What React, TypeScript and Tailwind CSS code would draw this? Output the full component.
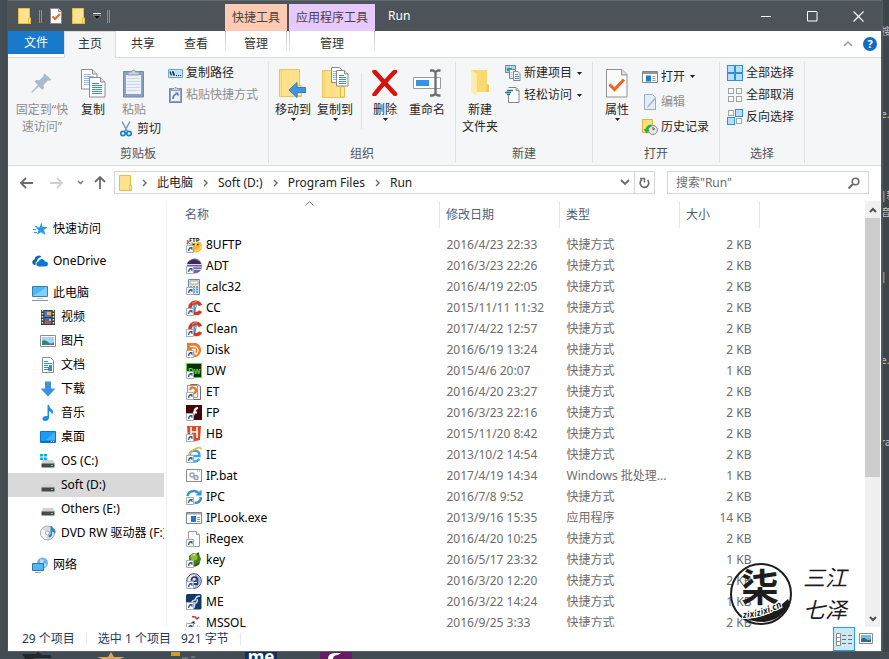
import React from 'react';

type IconProps = { children?: React.ReactNode; w?: number; h?: number };

const Svg = ({ children, w = 16, h = 16 }: IconProps) => (
  <svg width={w} height={h} viewBox={`0 0 ${w} ${h}`} className="block shrink-0" aria-hidden="true">
    {children}
  </svg>
);

const FolderSmall = () => (
  <Svg w={13} h={16}>
    <path d="M.5.5h11v9.5h1v5.500h-12z" fill="#ffe391" stroke="#e8bd42" />
    <path d="M10.500 15v-5h2v5z" fill="#fff0b8" stroke="#e8bd42" />
  </Svg>
);

const PageCheckSmall = () => (
  <Svg w={12} h={16}>
    <path d="M.5.5h8l3 3v12h-11z" fill="#fff" stroke="#8a8a8a" />
    <path d="M8.500.5v3h3" fill="#ddd" stroke="#8a8a8a" />
    <path d="M2.500 8.500l2.500 2.500 5-5" fill="none" stroke="#f0602a" strokeWidth="2" />
  </Svg>
);

const Caret = () => (
  <Svg w={5} h={3}>
    <path d="M0 0h5l-2.500 3z" fill="#1e1e1e" />
  </Svg>
);

const Pin = () => (
  <Svg w={22} h={22}>
    <path d="M13.500 1.500L20.500 8l-2 .8-1.500-.3-4.500 4.500.5 3-1.800 1.800-3.500-3.300L1.500 20.500l-1 .3.300-1.300 6-6.500L3.500 9.500 5.300 8l3 .3L12.800 4l-.3-1.300z" fill="#aabacd" />
  </Svg>
);

const pageLines = (x: number, y: number, color: string) => (
  <path d={`M${x} ${y}h7M${x} ${y + 2}h10M${x} ${y + 4}h10M${x} ${y + 6}h10M${x} ${y + 8}h10M${x} ${y + 10}h10`} stroke={color} />
);

const CopyIcon = () => (
  <Svg w={25} h={29}>
    <path d="M.5.5h11l4.500 4.500v15h-15.500z" fill="#fff" stroke="#8b8b8b" />
    <path d="M11.500.5v4.500h4.500" fill="#e4e4e4" stroke="#8b8b8b" />
    {pageLines(3, 5.5, '#8db9ee')}
    <path d="M8.500 8.500h11l4.500 4.500v15h-15.500z" fill="#fff" stroke="#8b8b8b" />
    <path d="M19.500 8.500v4.500h4.500" fill="#e4e4e4" stroke="#8b8b8b" />
    {pageLines(11, 14.5, '#3d8ae0')}
  </Svg>
);

const PasteIcon = () => (
  <Svg w={22} h={30}>
    <path d="M.5 3.500h20v25.500h-20z" fill="#8ca0c2" stroke="#7388ad" />
    <path d="M3 7h15v19h-15z" fill="#edf2f9" />
    <path d="M4 10.500h13M4 13.500h13M4 16.500h13M4 19.500h13M4 22.500h13" stroke="#ccd7e8" />
    <path d="M5 7v-3h3.500a2 2 0 0 1 4 0h3.500v3z" fill="#cbd3df" stroke="#8b9ab4" />
  </Svg>
);

const CutIcon = () => (
  <Svg w={12} h={16}>
    <path d="M2 .5l5.500 10M10 .5l-5.500 10" stroke="#8493a5" strokeWidth="1.500" />
    <circle cx="3" cy="12.500" r="2.200" fill="none" stroke="#1c7fc4" strokeWidth="1.700" />
    <circle cx="9" cy="12.500" r="2.200" fill="none" stroke="#1c7fc4" strokeWidth="1.700" />
  </Svg>
);

const CopyPathIcon = () => (
  <Svg w={15} h={16}>
    <path d="M.5 4.500h14v8h-14z" fill="#bfe3fb" stroke="#6fa8d0" />
    <path d="M2 6.500l1.500 4M4.500 6.500l1.500 4M5 6.500l1.500 4" stroke="#182a3a" strokeWidth="1.200" />
    <path d="M8 10.500h1M10 10.500h1M12 10.500h1" stroke="#182a3a" />
  </Svg>
);

const PasteShortcutIcon = () => (
  <Svg w={15} h={16}>
    <path d="M1.500 1.500h12v14h-12z" fill="#8ca0c2" stroke="#7388ad" />
    <path d="M3 4h9v10h-9z" fill="#edf2f9" />
    <path d="M4 3.500v-2h2l1-1h1l1 1h2v2z" fill="#cbd3df" stroke="#8b9ab4" />
    <path d="M5 12q0-4 3-4.500" fill="none" stroke="#5c77a5" strokeWidth="1.700" />
    <path d="M6.500 5.500h4v4z" fill="#5c77a5" />
  </Svg>
);

const folderBody = (
  <>
    <path d="M.5 1.500h20v16h1.500v11h-21.500z" fill="#ffe18a" stroke="#ecc558" />
    <path d="M2.500 2v26" stroke="#f3d272" />
    <path d="M18.500 28v-9q0-1.500 2-1.500t2 1.500v9z" fill="#ffe9a4" stroke="#e6bc47" />
  </>
);

const MoveToIcon = () => (
  <Svg w={28} h={30}>
    {folderBody}
    <path d="M10 22l8-7.500v5h8.500v5h-8.500v5z" fill="#3e97e0" stroke="#2b7dc4" />
  </Svg>
);

const CopyToIcon = () => (
  <Svg w={27} h={32}>
    <g transform="translate(0 2)">{folderBody}</g>
    <path d="M9.500.5h8l3 3v12h-11z" fill="#fff" stroke="#8b8b8b" />
    <path d="M11 4.500h6M11 6.500h6M11 8.500h6M11 10.500h6M11 12.500h6" stroke="#8db9ee" />
    <path d="M14.500 3.500h8l3.500 3.500v12h-11.500z" fill="#fff" stroke="#8b8b8b" />
    <path d="M22.500 3.500v3.500h3.500" fill="#e4e4e4" stroke="#8b8b8b" />
    <path d="M17 8.500h5M17 10.500h7M17 12.500h7M17 14.500h7M17 16.500h7" stroke="#3d8ae0" />
  </Svg>
);

const DeleteIcon = () => (
  <Svg w={26} h={26}>
    <path d="M2.500 1.500Q9 9 23 24M23 1.500Q9 16 2.500 24.500" fill="none" stroke="#d8120c" strokeWidth="4.500" strokeLinecap="round" />
  </Svg>
);

const RenameIcon = () => (
  <Svg w={28} h={28}>
    <path d="M.5 8.500h27v11h-27z" fill="#fdfdfd" stroke="#9b9b9b" />
    <path d="M3 11h13v6h-13z" fill="#3595e4" />
    <path d="M17 1.500h3l2.500 1.500 2.500-1.500h2.500M17 26.500h3l2.500-1.500 2.500 1.500h2.500M22.500 2v24" fill="none" stroke="#6d6d6d" strokeWidth="2.300" />
  </Svg>
);

const NewFolderIcon = () => (
  <Svg w={20} h={28}>
    <path d="M1 1h16v14l2 1v7h-13z" fill="#fad96f" />
    <path d="M17 15l2 1v7h-3z" fill="#f3c850" />
    <path d="M1 1l6 4v22l-6-4z" fill="#ffecaa" />
  </Svg>
);

const NewItemIcon = () => (
  <Svg>
    <path d="M.5.5h10v7h-10z" fill="#a7dbf3" stroke="#5d8ea8" />
    <path d="M2 3h5v3h-5z" fill="#3f8f9e" />
    <path d="M4.500 4.500h6v9h-6z" fill="#fff" stroke="#858585" />
    <path d="M8.500 6.500h4.500l2 2v7h-6.500z" fill="#fff" stroke="#858585" />
    <path d="M10 9.500h3M10 11.500h4M10 13.500h4" stroke="#3d8ae0" />
    <path d="M5.500 7.500h2M5.500 9.500h2M5.500 11.500h2" stroke="#8db9ee" />
  </Svg>
);

const EasyAccessIcon = () => (
  <Svg>
    <path d="M3.500.5h7.500l3 3v12h-10.500v-7" fill="#fff" stroke="#858585" />
    <path d="M11 .5v3h3" fill="#ddd" stroke="#858585" />
    <path d="M2 3.500h6M0 5.500h6M2 7.500h3" stroke="#1c6fb5" strokeWidth="1.300" />
  </Svg>
);

const PropertiesIcon = () => (
  <Svg w={22} h={29}>
    <path d="M.5.5h15.500l5 5v22.500h-20.500z" fill="#fbfbfb" stroke="#909090" />
    <path d="M15.500.5v5.500h5.500" fill="#ddd" stroke="#909090" />
    <path d="M3.500 15.500l5 5 9.500-10" fill="none" stroke="#f4611f" strokeWidth="3" />
  </Svg>
);

const OpenIcon = () => (
  <Svg>
    <path d="M.5 2.500h15v11h-15z" fill="#fff" stroke="#7f8487" />
    <path d="M1 3h14v2h-14z" fill="#8f9598" />
    <path d="M4 6.500h5v6h-5z" fill="#1a7ccd" />
    <path d="M10.500 7.500h3M10.500 9.500h3M10.500 11.500h3" stroke="#8e9ba5" />
  </Svg>
);

const EditIcon = () => (
  <Svg>
    <path d="M2.500.5h8l3 3v12h-11z" fill="#e6edf7" stroke="#98abc9" />
    <path d="M14.500 4l-8 9-1.500 1.500.5-2.500 8-9z" fill="#a4b4cd" />
  </Svg>
);

const HistoryIcon = () => (
  <Svg>
    <path d="M.5.5h10v13h-10z" fill="#ffe07f" stroke="#dcb447" />
    <circle cx="11" cy="11" r="4.500" fill="#e8e8e8" stroke="#8b8b8b" />
    <path d="M11 8v3l2-1.500" fill="none" stroke="#555" />
    <path d="M4 12q1-5 5.500-5.500" fill="none" stroke="#2fae3a" strokeWidth="2.500" />
    <path d="M1.500 10l3 4.500 3-3.500z" fill="#2fae3a" />
  </Svg>
);

const selectSquares = [
  [0, 0],
  [8, 0],
  [0, 8],
  [8, 8],
];

const SelectIcon = ({ on }: { on: number[] }) => (
  <Svg>
    {selectSquares.map(([x, y], i) =>
      on.includes(i) ? (
        <rect key={i} x={x + 0.5} y={y + 0.5} width="7" height="7" fill="#b9def9" stroke="#2e8fdd" />
      ) : (
        <rect key={i} x={x + 1.5} y={y + 1.5} width="5" height="5" fill="#fbfbfb" stroke="#a3a3a3" />
      ),
    )}
  </Svg>
);

/* sidebar icons */

const navIcons: Record<string, React.ReactNode> = {
  star: (
    <Svg>
      <path d="M9.500 1.500l1 4.500h5l-3.500 3 1.500 5-4.500-2.800-4 2.500 1.500-4.500-3-3h4z" fill="#2a9ae6" />
      <path d="M3 5.500h2M1 8.500h3M2 11.500h3" stroke="#2a9ae6" />
    </Svg>
  ),
  cloud: (
    <Svg>
      <path d="M2.500 12a2.800 2.800 0 0 1 0-5.500 4 4 0 0 1 7-2.500q-4 .5-4.500 4-2 1-1.500 4z" fill="#0a64b4" />
      <path d="M6.500 13.500q-2.500-.5-2.300-2.700.3-2 2.300-2.300 1-3 4-2.500 2 .5 2.500 2.500 3 .3 3 2.500t-2.500 2.500z" fill="#0b78d4" />
    </Svg>
  ),
  pc: (
    <Svg>
      <path d="M.5 1.500h15v10h-15z" fill="#4eb8f6" stroke="#3b7ea8" />
      <path d="M1 11l14-9v9z" fill="#7fd0ff" />
      <path d="M5 13.500h6" stroke="#b9c3ca" />
      <path d="M0 15.500h16" stroke="#7d98aa" />
    </Svg>
  ),
  video: (
    <Svg>
      <path d="M1 1h14v15h-14z" fill="#3c3c3c" />
      <path d="M2.500 1v15M13.500 1v15" stroke="#e8e8e8" strokeWidth="1.500" strokeDasharray="1.500 1.500" />
      <path d="M4.500 2h7v6h-7z" fill="#5577c9" />
      <path d="M4.500 9h7v6h-7z" fill="#3f6ac0" />
      <path d="M7 3h4v3h-4z" fill="#f1b630" />
      <path d="M5 11l3 1 3 3h-6z" fill="#d2512d" />
      <path d="M9 10h2v2h-2z" fill="#f1b630" />
    </Svg>
  ),
  picture: (
    <Svg>
      <path d="M.5 2.500h15v11h-15z" fill="#fff" stroke="#8d8d8d" />
      <path d="M2 4h12v8h-12z" fill="#a6d4f5" />
      <path d="M2 8q3-2 6 1t6 0v3h-12z" fill="#3c7f74" />
      <path d="M2 11h12v1h-12z" fill="#3f79b5" />
    </Svg>
  ),
  doc: (
    <Svg>
      <path d="M2.500.5h8l3 3v12h-11z" fill="#fff" stroke="#8d8d8d" />
      <path d="M4 4.500h4M4 6.500h8M4 8.500h4M4 10.500h8M4 12.500h4" stroke="#2b93d1" />
      <path d="M9 8h3v2h-3zM8 11h4v3h-4z" fill="#5d8796" />
    </Svg>
  ),
  down: (
    <Svg>
      <path d="M5 .5h6v7h4.500l-7.500 8-7.500-8h4.500z" fill="#3d91df" />
    </Svg>
  ),
  music: (
    <Svg>
      <path d="M7.500 0h1.500q.5 3 3 4.500 2 2 0 5.500 0-3-3-4v7q-.5 3-4 3-3-.5-2.500-3 1-2.500 5-2z" fill="#1b8fe6" />
    </Svg>
  ),
  desktop: (
    <Svg>
      <path d="M.5 2.500h15v11h-15z" fill="#1b9bf5" stroke="#0e74c3" />
      <path d="M6 11l9-8v8z" fill="#44b0fa" />
      <path d="M1 12.500h14" stroke="#0c6cb8" />
      <path d="M11 12.500h3" stroke="#fff" strokeDasharray="1 1" />
    </Svg>
  ),
  os: (
    <Svg>
      <path d="M0 1h3v2.500h-3zM4 1h3v2.500h-3zM0 4.500h3v2.500h-3zM4 4.500h3v2.500h-3z" fill="#10b0ea" />
      <path d="M3 7h10l2 4h-13.500z" fill="#cfd1d2" />
      <path d="M1.500 10.500h13v4h-13z" fill="#464a4c" />
      <path d="M11 12.500h2" stroke="#5de04a" />
    </Svg>
  ),
  drive: (
    <Svg>
      <path d="M3 7h10l2 4h-13.500z" fill="#cfd1d2" />
      <path d="M1.500 10.500h13v4h-13z" fill="#464a4c" />
      <path d="M11 12.500h2" stroke="#5de04a" />
    </Svg>
  ),
  dvd: (
    <Svg>
      <circle cx="7.500" cy="8" r="7" fill="#dadde0" stroke="#a5a9ad" />
      <path d="M2 4l5.500 4-1 6.500q-5-1.500-5.500-6z" fill="#f6f6f6" />
      <circle cx="7.500" cy="8" r="2" fill="#fff" stroke="#9aa" />
      <path d="M10.500 1h1.500q.5 2 3 3.500 1 2 0 4.500-.5-2-3-2.500v4q-1 2.500-3.500 1.500-.5-2 2-3z" fill="#2485d6" />
    </Svg>
  ),
  network: (
    <Svg>
      <circle cx="10.500" cy="6" r="5.500" fill="#66b7e6" />
      <path d="M8 2l4 1-1 3 4 1-2 3-5-3z" fill="#b5dcf0" />
      <path d="M.5 6.500h11v7h-11z" fill="#4eb8f6" stroke="#34759c" />
      <path d="M3 15.500h6" stroke="#8ea5b4" />
    </Svg>
  ),
};

const navItems = [
  { label: '快速访问', icon: 'star', top: true },
  { label: 'OneDrive', icon: 'cloud', top: true },
  { label: '此电脑', icon: 'pc', top: true },
  { label: '视频', icon: 'video' },
  { label: '图片', icon: 'picture' },
  { label: '文档', icon: 'doc' },
  { label: '下载', icon: 'down' },
  { label: '音乐', icon: 'music' },
  { label: '桌面', icon: 'desktop' },
  { label: 'OS (C:)', icon: 'os' },
  { label: 'Soft (D:)', icon: 'drive', selected: true },
  { label: 'Others (E:)', icon: 'drive' },
  { label: 'DVD RW 驱动器 (F:)', icon: 'dvd' },
  { label: '网络', icon: 'network', top: true },
];

/* file icons */

const shortcutBadge = (
  <>
    <path d="M.5 8.500h7v7h-7z" fill="#fff" stroke="#a9adb0" />
    <path d="M2.500 14q0-2.500 2-3" fill="none" stroke="#2c62a5" strokeWidth="1.400" />
    <path d="M3 10h3.500v3.500z" fill="#2c62a5" />
  </>
);

const ccleaner = (
  <>
    <path d="M7 4l-1 10h3l2-10z" fill="#4f93c4" />
    <path d="M14.500 5.500Q13 2 9 2.200 4.500 3 4 7.500T9 13.500q4 .5 5.500-2.500" fill="none" stroke="#cf3a26" strokeWidth="3.500" />
    <path d="M6 3.500q2-2 5-1.500" fill="none" stroke="#e98e7c" />
    <path d="M8 5l-1.500 7M10.500 4.500l-1.500 3" stroke="#9cc8e4" />
  </>
);

const fileIcons: Record<string, React.ReactNode> = {
  ftp: (
    <>
      <circle cx="10" cy="9.500" r="6" fill="#f6ba2c" />
      <path d="M9 14q5-1 6.500-5" fill="none" stroke="#ffe15a" strokeWidth="1.500" />
      <path d="M1 3.500l3 3M4 3l-3 4" stroke="#d03a20" strokeWidth="1.500" />
      <path d="M6.500 7.500h2M11 7.500h1.500" stroke="#222" strokeWidth="1.500" />
      <text x="3" y="5" fontSize="6" fontWeight="700" fill="#111" stroke="#fff" strokeWidth="1.500" paintOrder="stroke">FTP</text>
    </>
  ),
  adt: (
    <>
      <circle cx="8.500" cy="8" r="7.500" fill="#77629f" />
      <path d="M2 4q6-5 12 0l1 2h-14z" fill="#3c2c5e" />
      <path d="M1 6.500h15M1 9h15M3 11.500h12" stroke="#dcd4ec" />
    </>
  ),
  calc: (
    <>
      <path d="M2.500.5h11v15h-11z" fill="#cfe5f7" stroke="#4f93c8" />
      <path d="M4 2h8v3h-8z" fill="#fff" stroke="#e0a055" />
      <path d="M4 8h8M4 10.500h8M4 13h8" stroke="#4f8fc2" strokeDasharray="2 1" strokeWidth="1.500" />
    </>
  ),
  cc: ccleaner,
  disk: (
    <>
      <path d="M1 1h9q5 2 5 7t-5 7h-4l-5-7z" fill="#ee7926" />
      <path d="M4 4.500h5q3 1 3 4t-3 4M6 7.500h3v5" fill="none" stroke="#fff" strokeWidth="1.300" />
    </>
  ),
  dw: (
    <>
      <path d="M.5.5h15v14h-15z" fill="#0d2b06" stroke="#52dd1c" />
      <text x="2" y="10.500" fontSize="8" fontWeight="700" fill="#52dd1c">Dw</text>
    </>
  ),
  et: (
    <>
      <path d="M4.500.5h7l3 2v13h-10z" fill="#f2f2f2" stroke="#7b6d66" />
      <path d="M1.500 1.500h10v12h-10z" fill="#f4efec" stroke="#a39a95" />
      <path d="M4 6q1-3 3-2.500 3 .5 3 3t-3 3v3" fill="none" stroke="#e07b25" strokeWidth="2.200" />
    </>
  ),
  fp: (
    <>
      <path d="M0 0h16v15h-16z" fill="#43070a" />
      <path d="M12 3q-3 0-3.500 3.500l-2 6M7 7.500h4" fill="none" stroke="#fff" strokeWidth="2" />
    </>
  ),
  hb: (
    <>
      <path d="M1 0h14l-1 14-6 1.500-6-2z" fill="#dd4b2a" />
      <path d="M5 1v9M5 6h6M11 1v11" fill="none" stroke="#fff" strokeWidth="1.600" />
    </>
  ),
  ie: (
    <>
      <path d="M13.500 12q-2 2.500-5 2.500-5-.5-5-5.500t5-5.500q5.500.5 5 5.500h-9" fill="none" stroke="#3da4e4" strokeWidth="2.500" />
      <path d="M1 12q3-8 9-10.500 5-2 5 1" fill="none" stroke="#f0b82c" strokeWidth="1.700" />
    </>
  ),
  bat: (
    <>
      <path d="M.5 1.500h15v12h-15z" fill="#fcfcfc" stroke="#8d8d8d" />
      <path d="M11 3h1M13 3h1" stroke="#9a9a9a" />
      <circle cx="6" cy="7" r="2" fill="none" stroke="#98a2ab" strokeWidth="1.300" />
      <circle cx="10" cy="9.500" r="2" fill="#dce8f0" stroke="#8ba3b4" strokeWidth="1.300" />
    </>
  ),
  ipc: (
    <>
      <path d="M1.500 7q1-5 6.500-5 3 0 4.500 2M15 9q-1 5-6.500 5" fill="none" stroke="#3b8fd2" strokeWidth="2.500" />
      <path d="M9.500 6.500h6v-6z" fill="#3b8fd2" />
      <path d="M13 8h3l-1 3z" fill="#3b8fd2" />
    </>
  ),
  exe: (
    <>
      <path d="M.5 2.500h15v11h-15z" fill="#fff" stroke="#7f8487" />
      <path d="M1 3h14v1.500h-14z" fill="#a0a5a8" />
      <path d="M5 6h5v6h-5z" fill="#1a7ccd" />
      <path d="M11 7.500h3M11 9.500h3M11 11.500h3" stroke="#8e9ba5" />
    </>
  ),
  blank: (
    <>
      <path d="M2.500.5h8l3 3v12h-11z" fill="#fdfdfd" stroke="#9b9b9b" />
      <path d="M10.500.5v3h3" fill="#eee" stroke="#9b9b9b" />
    </>
  ),
  key: (
    <>
      <path d="M3 4l4-3 6 1 2 5-2 6-5 2-5-3z" fill="#4f7a1a" />
      <circle cx="8" cy="5" r="3.500" fill="#8fbf3c" />
      <path d="M7 3l2-.5" stroke="#dcefae" strokeWidth="1.500" />
      <path d="M11 2l2-1M13 11l-4 3" stroke="#31480f" strokeWidth="1.500" />
    </>
  ),
  kp: (
    <>
      <circle cx="8" cy="8" r="7.300" fill="#e3e8fa" stroke="#39435c" />
      <path d="M9 2q5 1 5 6t-5 6z" fill="#8fa3ea" />
      <path d="M5.500 7.500v-1q.5-2.500 3-2.500t3 2.500v1" fill="none" stroke="#262f4b" strokeWidth="1.500" />
      <path d="M5 7.500h7v4.500h-7z" fill="#2f3a70" />
      <path d="M8 9.500h3" stroke="#fff" />
    </>
  ),
  me: (
    <>
      <rect width="15.500" height="15.500" rx="1.500" fill="#123a68" />
      <path d="M14 2q-4 0-5 4-2 0-4 3h5q2-1 1-4M9 9l-1 5" fill="none" stroke="#d4e2f0" strokeWidth="1.300" />
    </>
  ),
  sql: (
    <>
      <path d="M6 1.500l3 .5 2 2 2-2" fill="none" stroke="#cf2e2e" strokeWidth="1.500" />
      <path d="M5 8l3-2 1 3M11 11h1M13 12h1" stroke="#8d9296" />
    </>
  ),
};

const files = [
  { name: '8UFTP', date: '2016/4/23 22:33', type: '快捷方式', size: '2 KB', icon: 'ftp' },
  { name: 'ADT', date: '2016/3/23 22:26', type: '快捷方式', size: '2 KB', icon: 'adt' },
  { name: 'calc32', date: '2016/4/19 22:05', type: '快捷方式', size: '2 KB', icon: 'calc' },
  { name: 'CC', date: '2015/11/11 11:32', type: '快捷方式', size: '2 KB', icon: 'cc' },
  { name: 'Clean', date: '2017/4/22 12:57', type: '快捷方式', size: '2 KB', icon: 'cc' },
  { name: 'Disk', date: '2016/6/19 13:24', type: '快捷方式', size: '2 KB', icon: 'disk' },
  { name: 'DW', date: '2015/4/6 20:07', type: '快捷方式', size: '1 KB', icon: 'dw' },
  { name: 'ET', date: '2016/4/20 23:27', type: '快捷方式', size: '2 KB', icon: 'et' },
  { name: 'FP', date: '2016/3/23 22:16', type: '快捷方式', size: '2 KB', icon: 'fp' },
  { name: 'HB', date: '2015/11/20 8:42', type: '快捷方式', size: '2 KB', icon: 'hb' },
  { name: 'IE', date: '2013/10/2 14:54', type: '快捷方式', size: '2 KB', icon: 'ie' },
  { name: 'IP.bat', date: '2017/4/19 14:34', type: 'Windows 批处理...', size: '1 KB', icon: 'bat', plain: true },
  { name: 'IPC', date: '2016/7/8 9:52', type: '快捷方式', size: '2 KB', icon: 'ipc' },
  { name: 'IPLook.exe', date: '2013/9/16 15:35', type: '应用程序', size: '14 KB', icon: 'exe', plain: true },
  { name: 'iRegex', date: '2016/4/20 10:25', type: '快捷方式', size: '2 KB', icon: 'blank' },
  { name: 'key', date: '2016/5/17 23:32', type: '快捷方式', size: '1 KB', icon: 'key' },
  { name: 'KP', date: '2016/3/20 12:20', type: '快捷方式', size: '2 KB', icon: 'kp' },
  { name: 'ME', date: '2016/3/22 14:24', type: '快捷方式', size: '1 KB', icon: 'me' },
  { name: 'MSSQL', date: '2016/9/25 3:33', type: '快捷方式', size: '2 KB', icon: 'sql' },
];

type BigProps = { icon: React.ReactNode; lines: string[]; width: string; caret?: boolean; disabled?: boolean };

const BigButton = ({ icon, lines, width, caret, disabled }: BigProps) => (
  <button
    disabled={disabled}
    className={`flex shrink-0 flex-col items-center leading-[17px] whitespace-nowrap ${width} ${disabled ? 'text-[#8d8d8d]' : 'text-[#262626]'}`}
  >
    <span className="mb-0.5 flex h-8 items-center justify-center">{icon}</span>
    {lines.map((line) => (
      <span key={line}>{line}</span>
    ))}
    {caret && <Caret />}
  </button>
);

type SmallProps = { icon: React.ReactNode; label: string; height?: string; caret?: boolean; disabled?: boolean };

const SmallButton = ({ icon, label, height = 'h-[22px]', caret, disabled }: SmallProps) => (
  <button
    disabled={disabled}
    className={`flex items-center gap-[3px] whitespace-nowrap ${height} ${disabled ? 'text-[#8d8d8d]' : 'text-[#262626]'}`}
  >
    <span className="flex w-4 justify-center">{icon}</span>
    {label}
    {caret && (
      <span className="ml-0.5">
        <Caret />
      </span>
    )}
  </button>
);

const Group = ({ title, width, children }: { title: string; width: string; children: React.ReactNode }) => (
  <section className={`flex shrink-0 flex-col border-r border-[#dfe1e3] ${width}`}>
    <div className="flex flex-1">{children}</div>
    <h2 className="text-center leading-[18px] text-[#505356]">{title}</h2>
  </section>
);

const ContextEdge = () => <div className="h-5 w-px bg-linear-to-b from-[#bdbdbd] to-[#eeeeee]" />;

const Crumb = () => (
  <span className="flex w-[25px] justify-center">
    <Svg w={5} h={8}>
      <path d="M1 1l3 3-3 3" fill="none" stroke="#6a6a6a" strokeWidth="1.400" />
    </Svg>
  </span>
);

const TitleBar = () => (
  <header className="flex h-[31px] shrink-0 items-end border-t border-[#62696e] bg-[#4d5459]">
    <div className="flex w-[217px] items-center self-center pl-2.5">
      <FolderSmall />
      <span className="mx-2 h-[13px] w-[3px] border-x border-[#8b9195]" />
      <button aria-label="属性" className="mr-2.5">
        <PageCheckSmall />
      </button>
      <button aria-label="新建文件夹" className="mr-2">
        <FolderSmall />
      </button>
      <button aria-label="自定义快速访问工具栏">
        <Svg w={8} h={8}>
          <path d="M0 1.500h8" stroke="#fff" />
          <path d="M0 3.500h8l-4 4z" fill="#000" stroke="#d0d0d0" strokeWidth=".5" />
        </Svg>
      </button>
      <span className="ml-1.5 h-[13px] w-[3px] border-x border-[#8b9195]" />
    </div>
    <div className="mr-0.5 flex h-[27px] w-[62px] items-center justify-center bg-[#fdcbb3] text-[#4a3f3a]">快捷工具</div>
    <div className="flex h-[27px] w-[86px] items-center justify-center bg-[#e7c9fb] text-[#463e4c]">应用程序工具</div>
    <h1 className="flex-1 self-center pl-[13px] text-white">Run</h1>
    <button aria-label="最小化" className="flex w-[46px] justify-center self-center">
      <Svg w={11} h={11}>
        <path d="M0 5.500h10" stroke="#fff" />
      </Svg>
    </button>
    <button aria-label="最大化" className="flex w-[46px] justify-center self-center">
      <Svg w={11} h={11}>
        <path d="M.5.5h9.500v9.500h-9.500z" fill="none" stroke="#fff" />
      </Svg>
    </button>
    <button aria-label="关闭" className="flex w-[46px] justify-center self-center">
      <Svg w={11} h={11}>
        <path d="M.5.5l10 10M10.500.5l-10 10" stroke="#fff" strokeWidth="1.200" />
      </Svg>
    </button>
  </header>
);

const RibbonTabs = () => (
  <div className="flex h-[27px] shrink-0 border-b border-[#d9dbdc] text-[#333]">
    <button className="h-[23px] w-14 bg-[#1979ca] text-white">文件</button>
    <button className="-mb-px w-[52px] border border-b-0 border-[#d9dbdc] bg-[#f5f6f7] pb-0.5">主页</button>
    <button className="h-[25px] w-[54px]">共享</button>
    <button className="h-[25px] w-[52px]">查看</button>
    <div className="mr-0.5 ml-[3px] flex w-[62px] justify-between">
      <ContextEdge />
      <button className="h-[25px]">管理</button>
      <ContextEdge />
    </div>
    <div className="flex w-[86px] justify-between">
      <ContextEdge />
      <button className="h-[25px]">管理</button>
      <ContextEdge />
    </div>
    <div className="flex flex-1 items-center justify-end gap-2.5 pr-1">
      <button aria-label="最小化功能区">
        <Svg w={10} h={6}>
          <path d="M1 5l4-4 4 4" fill="none" stroke="#9b9b9b" strokeWidth="1.500" />
        </Svg>
      </button>
      <button aria-label="帮助" className="h-3.5 w-3.5 rounded-full bg-[#0f6cc4] text-[11px] leading-[14px] font-bold text-white">
        ?
      </button>
    </div>
  </div>
);

const Ribbon = () => (
  <div className="flex h-[108px] shrink-0 border-b border-[#d9dbdc] bg-[#f5f6f7] pt-1 pb-0.5">
    <Group title="剪贴板" width="min-w-[261px]">
      <div className="flex pt-[5px] pl-1">
        <BigButton icon={<Pin />} lines={['固定到“快', '速访问”']} width="w-[60px]" disabled />
        <BigButton icon={<CopyIcon />} lines={['复制']} width="w-[42px]" />
        <div className="ml-1 w-[49px]">
          <BigButton icon={<PasteIcon />} lines={['粘贴']} width="w-8" disabled />
          <SmallButton icon={<CutIcon />} label="剪切" />
        </div>
      </div>
      <div>
        <SmallButton icon={<CopyPathIcon />} label="复制路径" />
        <SmallButton icon={<PasteShortcutIcon />} label="粘贴快捷方式" disabled />
      </div>
    </Group>
    <Group title="组织" width="min-w-[187px]">
      <div className="flex pt-[5px] pl-[3px]">
        <BigButton icon={<MoveToIcon />} lines={['移动到']} width="w-[42px]" caret />
        <BigButton icon={<CopyToIcon />} lines={['复制到']} width="w-[42px]" caret />
        <span className="mx-[5px] mt-1.5 h-14 w-px bg-[#dfe1e3]" />
        <BigButton icon={<DeleteIcon />} lines={['删除']} width="w-9" caret />
        <BigButton icon={<RenameIcon />} lines={['重命名']} width="w-12" />
      </div>
    </Group>
    <Group title="新建" width="min-w-[137px]">
      <div className="flex pt-[5px] pl-[3px]">
        <BigButton icon={<NewFolderIcon />} lines={['新建', '文件夹']} width="w-[42px]" />
      </div>
      <div className="pl-1">
        <SmallButton icon={<NewItemIcon />} label="新建项目" caret />
        <SmallButton icon={<EasyAccessIcon />} label="轻松访问" caret />
      </div>
    </Group>
    <Group title="打开" width="min-w-[127px]">
      <div className="flex pt-[5px] pl-[3px]">
        <BigButton icon={<PropertiesIcon />} lines={['属性']} width="w-[42px]" caret />
      </div>
      <div className="pt-0.5 pl-1">
        <SmallButton icon={<OpenIcon />} label="打开" height="h-[25px]" caret />
        <SmallButton icon={<EditIcon />} label="编辑" height="h-[25px]" disabled />
        <SmallButton icon={<HistoryIcon />} label="历史记录" height="h-[25px]" />
      </div>
    </Group>
    <Group title="选择" width="min-w-[85px]">
      <div className="pl-[7px]">
        <SmallButton icon={<SelectIcon on={[0, 1, 2, 3]} />} label="全部选择" />
        <SmallButton icon={<SelectIcon on={[]} />} label="全部取消" />
        <SmallButton icon={<SelectIcon on={[1, 2]} />} label="反向选择" />
      </div>
    </Group>
  </div>
);

const AddressBar = () => (
  <div className="flex shrink-0 items-center pt-[5px] pr-3 pb-[7px] pl-3">
    <button aria-label="后退">
      <Svg w={13} h={12}>
        <path d="M1 6h12M6 1l-5 5 5 5" fill="none" stroke="#6b6b6b" strokeWidth="1.800" />
      </Svg>
    </button>
    <button aria-label="前进" className="ml-[17px]">
      <Svg w={13} h={12}>
        <path d="M0 6h12M7 1l5 5-5 5" fill="none" stroke="#cfcfcf" strokeWidth="1.800" />
      </Svg>
    </button>
    <button aria-label="最近浏览的位置" className="ml-3.5">
      <Svg w={7} h={5}>
        <path d="M1 1l2.500 2.500 2.500-2.500" fill="none" stroke="#7a7a7a" strokeWidth="1.500" />
      </Svg>
    </button>
    <button aria-label="上移" className="mr-2 ml-2.5">
      <Svg w={12} h={13}>
        <path d="M6 13v-12M1 6l5-5 5 5" fill="none" stroke="#6b6b6b" strokeWidth="1.800" />
      </Svg>
    </button>
    <div className="flex h-[23px] flex-1 items-center border border-[#d5d5d5] pl-1 text-[#1c1c1c]">
      <FolderSmall />
      <nav aria-label="地址" className="flex flex-1 items-center">
        <Crumb />
        <a href="#pc">此电脑</a>
        <Crumb />
        <a href="#d">Soft (D:)</a>
        <Crumb />
        <a href="#program-files">Program Files</a>
        <Crumb />
        <a href="#run">Run</a>
      </nav>
      <button aria-label="以前的位置" className="mr-1">
        <Svg w={10} h={7}>
          <path d="M1 1l4 4 4-4" fill="none" stroke="#6b6b6b" strokeWidth="1.800" />
        </Svg>
      </button>
      <button aria-label="刷新" className="flex h-full w-5 items-center justify-center border-l border-[#d5d5d5]">
        <Svg w={11} h={12}>
          <path d="M3 2.500a4.300 4.300 0 1 0 5.500.5" fill="none" stroke="#6b6b6b" strokeWidth="1.700" />
          <path d="M1 1.500h4.500v4" fill="none" stroke="#6b6b6b" strokeWidth="1.500" />
        </Svg>
      </button>
    </div>
    <label className="ml-3 flex h-[23px] w-[202px] items-center border border-[#d5d5d5] pr-2 pl-2">
      <input
        type="search"
        aria-label="搜索"
        placeholder={'搜索"Run"'}
        className="min-w-0 flex-1 outline-none placeholder:text-[#6d6d6d]"
      />
      <Svg w={12} h={12}>
        <circle cx="7.500" cy="4.500" r="3.300" fill="none" stroke="#6b6b6b" strokeWidth="1.600" />
        <path d="M5 7l-4.500 4.500" stroke="#6b6b6b" strokeWidth="2" />
      </Svg>
    </label>
  </div>
);

const Sidebar = () => (
  <nav aria-label="导航窗格" className="w-[159px] shrink-0 overflow-hidden border-r border-[#f0f0f0] pt-4 pr-0.5 text-black">
    {navItems.map((item, i) => (
      <a
        key={item.label}
        href={`#${item.icon}`}
        className={`flex h-6 items-center gap-[5px] overflow-hidden whitespace-nowrap ${
          item.top ? 'pl-6' : 'pl-8'
        } ${item.top && i > 0 ? 'mt-2' : ''} ${item.selected ? 'bg-[#d9d9d9]' : ''}`}
      >
        {navIcons[item.icon]}
        {item.label}
      </a>
    ))}
  </nav>
);

const FileList = () => (
  <div className="min-w-0 flex-1 overflow-hidden">
    <table className="w-[593px] table-fixed text-left text-[#6d6d6d]">
      <colgroup>
        <col />
        <col className="w-[120px]" />
        <col className="w-[120px]" />
        <col className="w-20" />
      </colgroup>
      <thead className="text-[#4c607a]">
        <tr className="h-[27px]">
          <th className="relative border-r border-[#e5e5e5] pl-[18px] font-normal">
            名称
            <span className="absolute top-0 left-1/2">
              <Svg w={11} h={5}>
                <path d="M2.500 4.500l4-4 4 4" fill="none" stroke="#7d7d7d" />
              </Svg>
            </span>
          </th>
          <th className="border-r border-[#e5e5e5] pl-1.5 font-normal">修改日期</th>
          <th className="border-r border-[#e5e5e5] pl-1.5 font-normal">类型</th>
          <th className="border-r border-[#e5e5e5] pl-1.5 font-normal">大小</th>
        </tr>
      </thead>
      <tbody className="before:block before:h-[6px] before:content-['']">
        {files.map((file) => (
          <tr key={file.name} className="h-[21px] leading-[21px] whitespace-nowrap">
            <td className="pl-[19px] text-black">
              <div className="flex items-center gap-1">
                <Svg>
                  {fileIcons[file.icon]}
                  {!file.plain && shortcutBadge}
                </Svg>
                {file.name}
              </div>
            </td>
            <td className="pl-[7px]">{file.date}</td>
            <td className="pl-[7px]">{file.type}</td>
            <td className="pr-2 text-right">{file.size}</td>
          </tr>
        ))}
      </tbody>
    </table>
  </div>
);

const Scrollbar = () => (
  <div className="mr-px flex w-[15px] shrink-0 flex-col bg-[#f0f0f0]">
    <button aria-label="向上滚动" className="flex h-[17px] items-center justify-center">
      <Svg w={8} h={6}>
        <path d="M1 5l3-3 3 3" fill="none" stroke="#505050" strokeWidth="2" />
      </Svg>
    </button>
    <div className="flex-1">
      <div className="h-[66%] bg-[#cdcdcd]" />
    </div>
    <button aria-label="向下滚动" className="flex h-[17px] items-center justify-center">
      <Svg w={8} h={6}>
        <path d="M1 1l3 3 3-3" fill="none" stroke="#505050" strokeWidth="2" />
      </Svg>
    </button>
  </div>
);

const StatusBar = () => (
  <footer className="flex h-6 shrink-0 items-center pr-[7px] pl-3.5 text-[#1e395b]">
    <span>29 个项目</span>
    <span className="mx-[11px] h-3 w-px bg-[#e3e8ee]" />
    <span className="mr-2.5">选中 1 个项目</span>
    <span>921 字节</span>
    <span className="mx-[11px] h-3 w-px bg-[#e3e8ee]" />
    <button aria-label="详细信息" className="ml-auto flex h-full w-[22px] items-center justify-center border border-[#26a0da] bg-[#cbe8f6]">
      <Svg w={16} h={13}>
        <path d="M.5.5h4v12h-4zM.5 4.500h4M.5 8.500h4" fill="#fff" stroke="#8b8b8b" />
        <path d="M6 2.500h4M6 6.500h4M6 10.500h4M12 2.500h4M12 6.500h4M12 10.500h4" stroke="#6f6f6f" />
      </Svg>
    </button>
    <button aria-label="大缩略图" className="ml-1">
      <Svg w={15} h={12}>
        <path d="M.5.5h13v10h-13z" fill="#fff" stroke="#8b8b8b" />
        <path d="M2 2h10v7h-10z" fill="#79b7ee" />
        <path d="M2 6q3-2 5 0t5 0v3h-10z" fill="#326b71" />
      </Svg>
    </button>
  </footer>
);

const Watermark = () => (
  <svg width="124" height="66" viewBox="0 0 124 66" className="pointer-events-none absolute right-7 bottom-[23px]" fill="#1d1d1d">
    <circle cx="32" cy="32" r="30" fill="none" stroke="#1d1d1d" strokeWidth="2" />
    {/* brush stroke that sweeps along the lower rim */}
    <path d="M12 54q26 3 47-17 2 3 1 6-8 15-25 17-14 0-23-6z" />
    <text x="12" y="39" fontSize="38" fontWeight="700">柒</text>
    <path id="ring" d="M14 56Q38 55 60 40" fill="none" />
    <text fontSize="9" fontWeight="700" fontStyle="italic" stroke="#fff" strokeWidth="2" paintOrder="stroke">
      <textPath href="#ring">zixizixi.cn</textPath>
    </text>
    <text x="74" y="24" fontSize="22" fontStyle="italic">三江</text>
    <text x="74" y="56" fontSize="22" fontStyle="italic">七泽</text>
  </svg>
);

// bits of desktop text that show past the right edge of the window
const desktopText = [
  { text: '搜', top: 'top-[22px]' },
  { text: 'e..', top: 'top-[105px]' },
  { text: '|新', top: 'top-[186px]' },
  { text: '音..', top: 'top-[203px]' },
  { text: '|', top: 'top-[267px]' },
  { text: 'e..', top: 'top-[351px]' },
  { text: 'ra', top: 'top-[433px]' },
];

const Taskbar = () => (
  <div className="flex h-[7px] shrink-0 items-start overflow-hidden pl-[21px]">
    <Svg w={30} h={7}>
      <path d="M1 2h14l2-2 4 3h9v3h-16l-2 1h-8z" fill="#23272a" />
    </Svg>
    <span className="ml-[46px]">
      <Svg w={28} h={7}>
        <path d="M14 0l3 5h11l-5 2h-18l-5-2h11z" fill="#d5a869" />
      </Svg>
    </span>
    <span className="ml-[46px]">
      <Svg w={26} h={7}>
        <path d="M0 0h9v4h-9z" fill="#d79b2b" />
        <path d="M11 6h6M20 5h4" stroke="#8a949e" />
      </Svg>
    </span>
    <span className="ml-12 h-[7px] w-8 bg-[#14305a] text-center text-[17px] leading-[9px] font-bold text-white">me</span>
    <span className="ml-[43px] bg-[#641c64]">
      <Svg w={32} h={7}>
        <path d="M8 7q0-6 7-6h6l-3 2q-5 0-5 4z" fill="#fff" />
      </Svg>
    </span>
  </div>
);

export default function App() {
  return (
    <div className="flex h-screen flex-col bg-[#434c52] font-['Noto_Sans','Noto_Sans_CJK_SC',sans-serif] text-[12px] leading-[18px]">
      <div className="flex min-h-0 flex-1">
        <div className="w-2 shrink-0 border-r border-[#4d565b]" />
        <main className="relative flex min-w-0 flex-1 flex-col overflow-hidden border-b border-[#596166] bg-white">
          <TitleBar />
          <RibbonTabs />
          <Ribbon />
          <AddressBar />
          <div className="flex min-h-0 flex-1">
            <Sidebar />
            <FileList />
            <Scrollbar />
          </div>
          <StatusBar />
          <Watermark />
        </main>
        <div className="relative w-2 shrink-0 overflow-hidden border-l-2 border-[#4f585c] bg-[#3d464b] text-[10px] text-[#c3c7c9]">
          {desktopText.map((item) => (
            <span key={item.top} className={`absolute -left-0.5 whitespace-nowrap ${item.top}`}>
              {item.text}
            </span>
          ))}
        </div>
      </div>
      <Taskbar />
    </div>
  );
}
